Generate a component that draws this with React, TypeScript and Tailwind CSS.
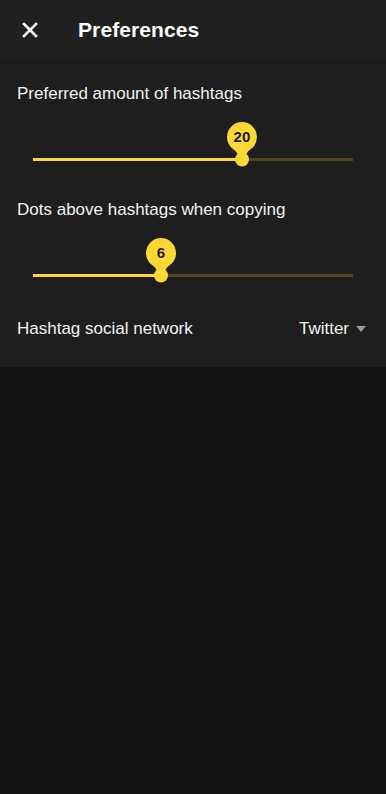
import React from 'react';

const font = { fontFamily: '"Liberation Sans", Arial, sans-serif' };

function Slider({ value, percent }: { value: number; percent: number }) {
  return (
    <div className="relative h-[50px] mx-[33px]">
      {/* track */}
      <div className="absolute left-0 right-0 top-[37px] h-[3px] bg-[#544720]" />
      <div className="absolute left-0 top-[37px] h-[3px] bg-[#fdd835]" style={{ width: `${percent}%` }} />
      {/* thumb + value bubble */}
      <div className="absolute top-[1px] -translate-x-1/2" style={{ left: `${percent}%` }}>
        <div className="relative w-[32px] h-[46px]">
          <svg width="32" height="46" viewBox="0 0 32 46" className="absolute inset-0">
            <circle cx="16" cy="15" r="15" fill="#fdd835" />
            <path d="M4 24 Q12 30 12.5 35 L19.5 35 Q20 30 28 24 Z" fill="#fdd835" />
            <circle cx="16" cy="37.5" r="7" fill="#fdd835" />
          </svg>
          <span className="absolute left-0 right-0 top-[5px] text-center text-[15px] font-bold text-[#1a1a1a] leading-[20px]">
            {value}
          </span>
        </div>
      </div>
    </div>
  );
}

export default function App() {
  return (
    <div className="w-[386px] h-[794px] bg-[#121212] text-white" style={font}>
      <header className="h-[60px] bg-[#202020] flex items-center border-b border-[#1c1c1c]">
        <button className="ml-[22px] w-[16px] h-[16px] flex items-center justify-center">
          <svg width="16" height="16" viewBox="0 0 16 16">
            <path d="M2 2 L14 14 M14 2 L2 14" stroke="#fff" strokeWidth="2.6" strokeLinecap="square" />
          </svg>
        </button>
        <h1 className="ml-[40px] text-[21px] font-bold tracking-[0.1px]">Preferences</h1>
      </header>

      <section className="bg-[#1e1e1e] h-[307px] flex flex-col">
        <div className="h-[124px] border-b border-[#222222] pt-[24px]">
          <p className="px-[17px] text-[17px] leading-[20px] text-[#f2f2f2]">Preferred amount of hashtags</p>
          <div className="mt-[17px]">
            <Slider value={20} percent={65.3} />
          </div>
        </div>
        <div className="h-[113px] border-b border-[#222222] pt-[16px]">
          <p className="px-[17px] text-[17px] leading-[20px] text-[#f2f2f2]">Dots above hashtags when copying</p>
          <div className="mt-[17px]">
            <Slider value={6} percent={40} />
          </div>
        </div>
        <div className="flex-1 flex items-start justify-between pl-[17px] pr-[20px] pt-[22px]">
          <span className="text-[17px] leading-[20px] text-[#f2f2f2]">Hashtag social network</span>
          <span className="flex items-center gap-[7px] text-[17px] leading-[20px] text-[#f2f2f2]">
            Twitter
            <svg width="10" height="7" viewBox="0 0 10 7">
              <path d="M0 0 L10 0 L5 6 Z" fill="#9a9a9a" />
            </svg>
          </span>
        </div>
      </section>
    </div>
  );
}
